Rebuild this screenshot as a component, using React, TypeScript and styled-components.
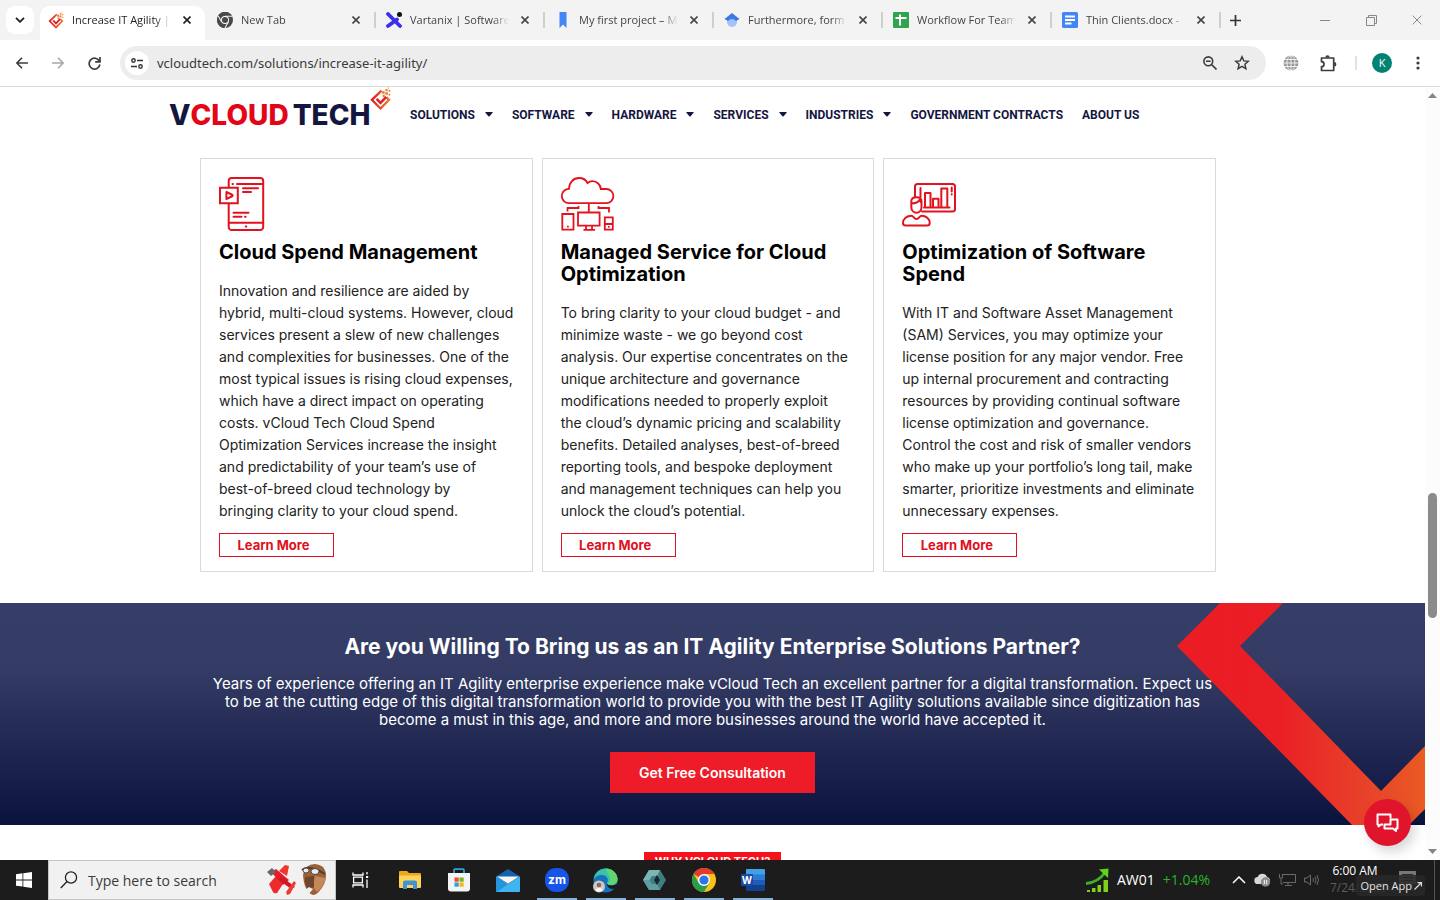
import React from "react";
import styled, { createGlobalStyle } from "styled-components";

const ui = `"Open Sans", "Noto Sans", sans-serif`;
const site = `Inter, "Liberation Sans", sans-serif`;
const navy = "#14163f";
const red = "#e01020";

const GlobalStyle = createGlobalStyle`
  *, *::before, *::after { box-sizing: border-box; }
  html, body { margin: 0; padding: 0; }
  body { font-family: ${ui}; background: #fff; color: #1f1f1f; overflow: hidden; }
  button, input { font: inherit; color: inherit; border: 0; margin: 0; padding: 0; background: none; }
  button { cursor: pointer; }
  h2, h3, p, ul { margin: 0; padding: 0; }
  a { color: inherit; text-decoration: none; }
  svg { display: block; flex: none; }
`;

const Screen = styled.div`
  display: flex;
  flex-direction: column;
  height: 100vh;
  overflow: hidden;
`;

/* ---------- browser tabs ---------- */

const TabStrip = styled.div`
  display: flex;
  flex: none;
  height: 40px;
  padding-left: 6px;
  background: #f3f3f3;
`;

const TabSearch = styled.button`
  display: grid;
  place-items: center;
  width: 28px;
  height: 28px;
  margin: 6px 6px 0 0;
  border-radius: 9px;
  background: #fff;
`;

const TabList = styled.div`
  display: grid;
  grid-template-columns: repeat(7, minmax(0, 1fr));
  flex: 0 1 1183px;
  min-width: 0;
`;

const Tab = styled.div<{ $active?: boolean }>`
  display: flex;
  min-width: 0;
  align-items: center;
  gap: 8px;
  height: ${(p) => (p.$active ? "34px" : "28px")};
  margin: ${(p) => (p.$active ? "6px 4px 0 0" : "6px 0 0 0")};
  padding: ${(p) => (p.$active ? "0 10px 6px 8px" : "0 2px 0 8px")};
  border-radius: ${(p) => (p.$active ? "10px 10px 0 0" : "0")};
  background: ${(p) => (p.$active ? "#fff" : "transparent")};
  color: ${(p) => (p.$active ? "#1f1f1f" : "#444")};
`;

const TabTitle = styled.span`
  flex: 1 1 0;
  min-width: 0;
  overflow: hidden;
  white-space: nowrap;
  font-size: 11px;
  line-height: 16px;
  mask-image: linear-gradient(90deg, #000 84%, transparent 100%);
`;

const TabClose = styled.button`
  display: grid;
  place-items: center;
  width: 16px;
  height: 16px;
`;

const TabDivider = styled.span<{ $shown: boolean }>`
  width: 2px;
  height: 16px;
  flex: none;
  margin-left: 2px;
  background: ${(p) => (p.$shown ? "#cfcfcf" : "transparent")};
`;

const NewTab = styled.button`
  display: grid;
  place-items: center;
  width: 24px;
  height: 28px;
  margin-top: 6px;
`;

const WindowControls = styled.div`
  display: flex;
  margin-left: auto;
`;

const WindowButton = styled.button`
  display: grid;
  place-items: center;
  width: 46px;
  height: 40px;
  color: #888;
`;

/* ---------- browser toolbar ---------- */

const Toolbar = styled.div`
  display: flex;
  flex: none;
  align-items: center;
  height: 47px;
  padding: 0 4px;
  border-bottom: 1px solid #dcdcdc;
  background: #fff;
`;

const ToolButton = styled.button<{ $w?: number; $dim?: boolean }>`
  display: grid;
  place-items: center;
  width: ${(p) => p.$w ?? 36}px;
  height: 34px;
  color: ${(p) => (p.$dim ? "#a8a8a8" : "#3c3c3c")};
`;

const Omnibox = styled.div`
  display: flex;
  flex: 1;
  align-items: center;
  height: 34px;
  margin: 0 8px;
  padding: 0 8px 0 5px;
  border-radius: 17px;
  background: #ededed;
`;

const SiteInfo = styled.button`
  display: grid;
  place-items: center;
  width: 24px;
  height: 24px;
  border-radius: 50%;
  background: #fff;
`;

const UrlInput = styled.input`
  flex: 1;
  min-width: 0;
  margin-left: 8px;
  font-family: "Noto Sans", sans-serif;
  font-size: 13px;
  color: #3a3a3a;
  outline: 0;
`;

const ToolDivider = styled.span`
  width: 2px;
  height: 14px;
  margin: 0 7px;
  background: #e2e2e2;
`;

const Avatar = styled.span`
  display: grid;
  place-items: center;
  width: 20px;
  height: 20px;
  border-radius: 50%;
  background: #018273;
  color: #fff;
  font-size: 11px;
  line-height: 20px;
`;

/* ---------- page frame ---------- */

const Viewport = styled.div`
  display: flex;
  flex: 1;
  min-height: 0;
  overflow: hidden;
`;

const Page = styled.div`
  flex: 1;
  min-width: 0;
  font-family: ${site};
  background: #fff;
`;

const ScrollBar = styled.div`
  display: flex;
  flex-direction: column;
  align-items: center;
  width: 15px;
  padding: 6px 0;
  background: #fcfcfc;
`;

const ScrollThumb = styled.div`
  width: 9px;
  height: 125px;
  border-radius: 5px;
  background: #8b8b8b;
`;

const Spacer = styled.div<{ $grow: number }>`
  flex: ${(p) => p.$grow} 1 0;
`;

/* ---------- site header ---------- */

const SiteHeader = styled.header`
  display: flex;
  align-items: center;
  height: 55px;
  max-width: 1087px;
  margin: 0 auto;
`;

const Logo = styled.a`
  display: flex;
  width: 223px;
  height: 55px;
  font-size: 28px;
  line-height: 56px;
  font-weight: 800;
  color: ${navy};
  white-space: nowrap;
`;

const LogoWord = styled.span<{ $red?: boolean; $gap?: boolean }>`
  color: ${(p) => (p.$red ? "#e30617" : navy)};
  margin-left: ${(p) => (p.$gap ? "4px" : "0")};
`;

const Nav = styled.nav`
  display: flex;
  gap: 19px;
  margin-left: 18px;
  font-family: Roboto, sans-serif;
  font-size: 12px;
  line-height: 16px;
  font-weight: 700;
  color: ${navy};
  white-space: nowrap;
`;

const NavLink = styled.a`
  display: flex;
  align-items: center;
  gap: 10px;
`;

/* ---------- solution cards ---------- */

const CardGrid = styled.section`
  display: grid;
  grid-template-columns: repeat(3, 1fr);
  gap: 9px;
  max-width: 1025px;
  margin: 0 auto;
  padding: 16px 9px 31px 0;
`;

const Card = styled.article`
  display: flex;
  flex-direction: column;
  align-items: flex-start;
  padding: 18px 18px 14px;
  border: 1px solid #dadada;
`;

const CardTitle = styled.h3`
  margin-top: 10px;
  font-size: 20px;
  line-height: 22px;
  font-weight: 700;
  color: #000;
  white-space: nowrap;
`;

const CardText = styled.p`
  margin-top: 17px;
  font-size: 14px;
  line-height: 22px;
  color: #222;
  white-space: nowrap;
`;

const CardButton = styled.button`
  width: 115px;
  height: 24px;
  margin-top: 11px;
  padding-right: 6px;
  border: 1px solid ${red};
  font-size: 13px;
  line-height: 20px;
  font-weight: 700;
  color: ${red};
`;

/* ---------- call to action ---------- */

const Cta = styled.section`
  position: relative;
  display: flex;
  flex-direction: column;
  align-items: center;
  height: 222px;
  padding-top: 32px;
  background: linear-gradient(180deg, #353e66 0%, #343c65 30%, #0a123e 100%);
  color: #fff;
  text-align: center;
`;

const CtaArt = styled.svg`
  position: absolute;
  top: 0;
  right: 0;
`;

const CtaTitle = styled.h2`
  position: relative;
  font-size: 21px;
  line-height: 24px;
  font-weight: 700;
`;

const CtaText = styled.p`
  position: relative;
  margin-top: 16px;
  font-size: 15px;
  line-height: 18px;
  white-space: nowrap;
`;

const CtaButton = styled.button`
  position: relative;
  width: 205px;
  height: 41px;
  margin-top: 23px;
  background: #ed1c28;
  font-size: 14px;
  font-weight: 600;
  color: #fff;
`;

const NextSection = styled.section`
  display: flex;
  justify-content: center;
  padding-top: 27px;
`;

const SectionTag = styled.span`
  width: 137px;
  padding-top: 1px;
  background: #f5121d;
  font-size: 11px;
  line-height: 16px;
  font-weight: 700;
  color: #fff;
  text-align: center;
  white-space: nowrap;
`;

const ChatButton = styled.button`
  position: fixed;
  right: 29px;
  bottom: 54px;
  display: grid;
  place-items: center;
  width: 47px;
  height: 47px;
  border-radius: 50%;
  background: #e0142c;
  box-shadow: 4px 6px 12px rgba(0, 0, 0, 0.16);
`;

/* ---------- taskbar ---------- */

const TaskBar = styled.footer`
  position: relative;
  display: flex;
  flex: none;
  height: 40px;
  background: #1c1c1c;
  color: #fff;
`;

const StartButton = styled.button`
  display: grid;
  place-items: center;
  width: 48px;
`;

const SearchBox = styled.label`
  display: flex;
  align-items: center;
  gap: 10px;
  width: 288px;
  padding: 0 8px 0 11px;
  border: 1px solid #c4c4c4;
  background: #f1f1f1;
`;

const SearchInput = styled.input`
  flex: 1;
  min-width: 0;
  font-size: 14px;
  color: #333;
  outline: 0;
  &::placeholder { color: #3a3a3a; opacity: 1; }
`;

const TaskButton = styled.button<{ $open?: boolean }>`
  display: flex;
  flex-direction: column;
  align-items: center;
  justify-content: center;
  width: 49px;
  height: 40px;
  background: ${(p) =>
    p.$open ? "linear-gradient(#84b4de, #84b4de) center bottom / 40px 2px no-repeat" : "none"};
`;

const Tray = styled.div`
  display: flex;
  align-items: center;
  margin-left: auto;
  margin-right: 5px;
  padding-right: 18px;
  border-right: 1px solid #555;
  font-size: 14px;
  line-height: 20px;
`;

const Stock = styled.button`
  display: flex;
  align-items: center;
  gap: 8px;
  margin-right: 22px;
`;

const Gain = styled.span`
  color: #25b425;
`;

const TrayIcons = styled.div`
  display: flex;
  align-items: center;
  gap: 8px;
  margin-right: 10px;
`;

const Clock = styled.div`
  align-self: flex-start;
  width: 50px;
  margin-right: 19px;
  padding-top: 4px;
  font-size: 12px;
  text-align: center;
`;

const Time = styled.div`
  height: 11px;
  overflow: hidden;
  line-height: 14px;
  white-space: nowrap;
`;

const DateText = styled.div`
  margin-top: 6px;
  line-height: 14px;
  color: #5c5c5c;
`;

const OpenApp = styled.a`
  position: absolute;
  right: 15px;
  bottom: 4px;
  display: flex;
  align-items: center;
  gap: 2px;
  height: 21px;
  padding: 0 3px 0 5px;
  border-radius: 4px;
  background: rgba(40, 40, 40, 0.86);
  font-size: 11px;
  color: #e4e4e4;
  white-space: nowrap;
`;

/* ---------- drawings ---------- */

const Cross = ({ size = 8, width = 2 }: { size?: number; width?: number }) => (
  <svg width={size} height={size} viewBox="0 0 8 8" stroke="currentColor" strokeWidth={width} fill="none">
    <path d="M.5 .5l7 7M7.500 .5l-7 7" />
  </svg>
);

const Diamond = ({ w, h }: { w: number; h: number }) => (
  <svg width={w} height={h} viewBox="0 0 20 22" fill="none">
    <defs>
      <linearGradient id="diamond" x1="0" x2="1">
        <stop offset="0" stopColor="#e01f26" />
        <stop offset="1" stopColor="#ee7a2e" />
      </linearGradient>
    </defs>
    <path d="M11 3L1.800 11.800 10 20l8.200-8.200-2.400-2.400" stroke="url(#diamond)" strokeWidth="2.200" />
    <path d="M6.300 10.800l3.700 3.900 5.500-5.700" stroke="#dc2228" strokeWidth="2.400" />
    <path
      d="M11.500 3.500H14V6h-2.500zM14.600 4.600H17V7h-2.400zM14.800 1.500h2v2h-2zM17.700 2.500h1.600v1.600h-1.600zM17.700 6h1.600v1.600h-1.600zM17 0h1v1h-1zM12 7h2v2h-2z"
      fill="#ee7a2e"
    />
  </svg>
);

const ChromeMark = ({ size, gray }: { size: number; gray?: boolean }) => (
  <svg width={size} height={size} viewBox="0 0 24 24">
    <circle cx="12" cy="12" r="12" fill={gray ? "#4a4a4a" : "#fbc116"} />
    <path d="M12 12L1.600 6A12 12 0 0 1 22.400 6H12z" fill={gray ? "#4a4a4a" : "#e33b2e"} />
    <path d="M1.600 6A12 12 0 0 0 12 24l5.200-9L12 12 6.800 15z" fill={gray ? "#4a4a4a" : "#2a9d4b"} />
    {gray && <path d="M12 6.500h10.500M6.800 14.500L1.800 6M17 15l-5 9" stroke="#f3f3f3" strokeWidth="1.600" />}
    <circle cx="12" cy="12" r="6" fill="#fff" />
    <circle cx="12" cy="12" r="4.600" fill={gray ? "#4a4a4a" : "#2f74e8"} />
  </svg>
);

const favicons: Record<string, React.ReactNode> = {
  vcloud: <Diamond w={16} h={17} />,
  chrome: <ChromeMark size={16} gray />,
  vartanix: (
    <svg width="16" height="16" viewBox="0 0 16 16">
      <path d="M2 2l12 12M11 7.500L2 14" stroke="#3a2ff0" strokeWidth="3.800" strokeLinecap="round" />
      <circle cx="13.500" cy="2.500" r="2.500" fill="#111" />
    </svg>
  ),
  project: (
    <svg width="16" height="16" viewBox="0 0 16 16">
      <path d="M4.500 0h7v16L8 12.500 4.500 16z" fill="#4285f4" />
    </svg>
  ),
  scholar: (
    <svg width="16" height="16" viewBox="0 0 16 16">
      <circle cx="8" cy="10" r="5" fill="#a3c2f8" />
      <path d="M8 1l7.500 6L12 9a5 5 0 0 0-8 0L.5 7z" fill="#3c78e6" />
    </svg>
  ),
  sheet: (
    <svg width="16" height="16" viewBox="0 0 16 16">
      <rect width="16" height="16" rx="1" fill="#2fa550" />
      <path d="M7 2.500v11M2.500 6h11" stroke="#fff" strokeWidth="2" />
    </svg>
  ),
  doc: (
    <svg width="16" height="16" viewBox="0 0 16 16">
      <rect width="16" height="16" rx="1.500" fill="#4285f4" />
      <path d="M3 4.500h10M3 8h10M3 11.500h6.500" stroke="#fff" strokeWidth="1.800" />
    </svg>
  ),
};

const tabs = [
  { icon: "vcloud", title: "Increase IT Agility |", active: true },
  { icon: "chrome", title: "New Tab" },
  { icon: "vartanix", title: "Vartanix | Software" },
  { icon: "project", title: "My first project – M" },
  { icon: "scholar", title: "Furthermore, form" },
  { icon: "sheet", title: "Workflow For Team" },
  { icon: "doc", title: "Thin Clients.docx -" },
];

const PhoneArt = () => (
  <svg width="54" height="54" viewBox="0 0 54 54" fill="none" stroke="#e3121f" strokeWidth="2" strokeLinecap="round">
    <path d="M9.700 10V4a3 3 0 0 1 3-3h28.500a3 3 0 0 1 3 3v46a3 3 0 0 1-3 3H12.700a3 3 0 0 1-3-3V27" />
    <path d="M1 10.800h17.800v15.400H1z" />
    <path d="M7.400 15v7l5.200-2.500a1 1 0 0 0 0-2z" strokeLinejoin="round" />
    <path d="M13.500 7h.5M18 7h26M24 11.300h15M24 15h8M14.500 35.700h15M14.500 39.700h8M26 39.700h.6M10 45.700h34M26.700 49.400h.6" />
  </svg>
);

const CloudArt = () => (
  <svg width="54" height="54" viewBox="0 0 54 54" fill="none" stroke="#e3121f" strokeWidth="1.800">
    <path d="M8 26.200A7.200 7.200 0 0 1 8 11.800C8 5.500 12.500 1 18 1c4 0 7 2 8.500 5 1.500-1.300 3-1.800 5-1.800 4.500 0 8 3.500 8.300 7.800h5.500a7.100 7.100 0 0 1 0 14.200z" />
    <path d="M6.500 34.500V31h11v-2M27.800 27v8M37.500 29v2h10.500v4.500" />
    <path d="M1.300 37h11.200v15.600H1.300zM17 35.500h21.600v13.200H17zM43.800 40.300h8v12.300h-8z" />
    <path d="M25 49v3.500M31 49v3.500M22.500 52.800H34M43.800 47h8M6 49.700h1.800M47 49.800h1.600" />
  </svg>
);

const BoardArt = () => (
  <svg width="54" height="54" viewBox="0 0 54 54" fill="none" stroke="#e3121f" strokeWidth="2" strokeLinecap="round" strokeLinejoin="round">
    <path d="M13 19.500V9.500A2.500 2.500 0 0 1 15.500 7H50.500A2.500 2.500 0 0 1 53 9.500V32A2.500 2.500 0 0 1 50.500 34.500H20" />
    <path d="M18.500 11v9M22 30.500h25.500M23 30V16h5.500v14M31 30v-8.300h5.500V30M39.300 30V11.500h6V30M49.700 10.500v4M49.700 17.300v.3" />
    <path d="M9.300 24.500c0-2.500 2-4.300 5.200-4.300 3 0 5 1.800 5 4.300v5.500c0 3.500-2.300 5.700-5 5.700-2.900 0-5.200-2.200-5.200-5.700zM9.500 26.500c4-.3 7-1.200 8-3.500l2 3" />
    <path d="M9.500 38.700c1.800 0 2.500 3.300 5 3.300s3.200-3.300 5-3.300c4.500 0 8.200 3.300 8.200 7.300 0 1.700-1 2.500-2.700 2.500H3.700C2 48.500 1 47.600 1 46c0-4 3.900-7.300 8.500-7.300z" />
  </svg>
);

const cards = [
  {
    art: <PhoneArt />,
    title: ["Cloud Spend Management"],
    lines: [
      "Innovation and resilience are aided by",
      "hybrid, multi-cloud systems. However, cloud",
      "services present a slew of new challenges",
      "and complexities for businesses. One of the",
      "most typical issues is rising cloud expenses,",
      "which have a direct impact on operating",
      "costs. vCloud Tech Cloud Spend",
      "Optimization Services increase the insight",
      "and predictability of your team’s use of",
      "best-of-breed cloud technology by",
      "bringing clarity to your cloud spend.",
    ],
  },
  {
    art: <CloudArt />,
    title: ["Managed Service for Cloud", "Optimization"],
    lines: [
      "To bring clarity to your cloud budget - and",
      "minimize waste - we go beyond cost",
      "analysis. Our expertise concentrates on the",
      "unique architecture and governance",
      "modifications needed to properly exploit",
      "the cloud’s dynamic pricing and scalability",
      "benefits. Detailed analyses, best-of-breed",
      "reporting tools, and bespoke deployment",
      "and management techniques can help you",
      "unlock the cloud’s potential.",
    ],
  },
  {
    art: <BoardArt />,
    title: ["Optimization of Software", "Spend"],
    lines: [
      "With IT and Software Asset Management",
      "(SAM) Services, you may optimize your",
      "license position for any major vendor. Free",
      "up internal procurement and contracting",
      "resources by providing continual software",
      "license optimization and governance.",
      "Control the cost and risk of smaller vendors",
      "who make up your portfolio’s long tail, make",
      "smarter, prioritize investments and eliminate",
      "unnecessary expenses.",
    ],
  },
];

const ctaLines = [
  "Years of experience offering an IT Agility enterprise experience make vCloud Tech an excellent partner for a digital transformation. Expect us",
  "to be at the cutting edge of this digital transformation world to provide you with the best IT Agility solutions available since digitization has",
  "become a must in this age, and more and more businesses around the world have accepted it.",
];

const Lines = ({ of }: { of: string[] }) => (
  <>
    {of.map((line, i) => (
      <React.Fragment key={line}>
        {i > 0 && <br />}
        {line}
      </React.Fragment>
    ))}
  </>
);

const navItems = [
  { label: "SOLUTIONS", menu: true },
  { label: "SOFTWARE", menu: true },
  { label: "HARDWARE", menu: true },
  { label: "SERVICES", menu: true },
  { label: "INDUSTRIES", menu: true },
  { label: "GOVERNMENT CONTRACTS" },
  { label: "ABOUT US" },
];

const apps: { name: string; open?: boolean; art: React.ReactNode }[] = [
  {
    name: "Task View",
    art: (
      <svg width="18" height="18" viewBox="0 0 18 18" fill="none" stroke="#fff" strokeWidth="1.300">
        <path d="M1 1.500V4h10V1.500M1 16.500V14h10v2.500M1.600 6.200h8.800v5.600H1.600zM15 1v2.500M15 8.500V17" />
        <path d="M14 5h2.200v2H14z" fill="#fff" stroke="none" />
      </svg>
    ),
  },
  {
    name: "File Explorer",
    art: (
      <svg width="22" height="20" viewBox="0 0 22 20">
        <path d="M0 2a1 1 0 0 1 1-1h7l2 2h11a1 1 0 0 1 1 1v4H0z" fill="#e8a91c" />
        <path d="M0 5.500h22V17a1 1 0 0 1-1 1H1a1 1 0 0 1-1-1z" fill="#fdd35a" />
        <path d="M4 19v-6.500a2 2 0 0 1 2-2h10a2 2 0 0 1 2 2V19h-4v-4H8v4z" fill="#3f93d6" />
      </svg>
    ),
  },
  {
    name: "Microsoft Store",
    art: (
      <svg width="24" height="24" viewBox="0 0 24 24">
        <path d="M7 6V2.200a1 1 0 0 1 1-1h8a1 1 0 0 1 1 1V6" fill="none" stroke="#2ba5d8" strokeWidth="1.800" />
        <path d="M1 5h22v15.500a3 3 0 0 1-3 3H4a3 3 0 0 1-3-3z" fill="#f4f4f4" />
        <path d="M7.500 9.500h4.200v4.200H7.500z" fill="#e8502a" />
        <path d="M12.500 9.500h4.200v4.200h-4.200z" fill="#79b51f" />
        <path d="M7.500 14.500h4.200v4.200H7.500z" fill="#2a9fe0" />
        <path d="M12.500 14.500h4.200v4.200h-4.200z" fill="#f7b616" />
      </svg>
    ),
  },
  {
    name: "Mail",
    art: (
      <svg width="24" height="23" viewBox="0 0 24 23">
        <path d="M0 7.500L12 0l12 7.500V12H0z" fill="#1460ad" />
        <path d="M0 7.500l12 7.500 12-7.500V22a1 1 0 0 1-1 1H1a1 1 0 0 1-1-1z" fill="#3fb4ee" />
        <path d="M0 7.500l12 7.500L1 23a1 1 0 0 1-1-1z" fill="#2494dc" />
        <path d="M1 7.500h22L12 14.800z" fill="#f5f5f5" />
      </svg>
    ),
  },
  {
    name: "Zoom",
    open: true,
    art: (
      <svg width="24" height="24" viewBox="0 0 24 24">
        <rect width="24" height="24" rx="11" fill="#1555ea" />
        <text x="12" y="16" textAnchor="middle" fontFamily="Inter, sans-serif" fontSize="12" fontWeight="700" fill="#fff">
          zm
        </text>
      </svg>
    ),
  },
  {
    name: "Microsoft Edge",
    open: true,
    art: (
      <svg width="25" height="25" viewBox="0 0 25 25">
        <circle cx="12.500" cy="12.500" r="12" fill="#1672bd" />
        <path d="M.6 11.500C1.500 5 6.500.5 12.500.5c7 0 12 5 12 10.500 0 4-3 6-6.500 6-2.500 0-4-1-4-2 0-.8.9-1.200.9-3C14.900 9 12 7 8.500 7S2 9 .6 11.500z" fill="#38c2b0" />
        <path d="M12.500.5c7 0 12 5 12 10.500 0 4-3 6-6.500 6-2.500 0-4-1-4-2 3 0 5-4 1-9z" fill="#5fd56e" />
        <path d="M14 15c0 2 2 2.600 4.500 2.400 3 0 5-1 6.500-2.400l-.5 4c-2 2-5 2.500-7.500 1.500-2-1-3.500-3-3-5.500z" fill="#1c1c1c" />
        <circle cx="6" cy="18.500" r="6" fill="#cfc8c3" />
        <circle cx="6" cy="17" r="2.300" fill="#8d6653" />
        <path d="M2.500 22.500a3.600 3.600 0 0 1 7 0 6 6 0 0 1-7 0z" fill="#f7f7f7" />
      </svg>
    ),
  },
  {
    name: "Workspace",
    open: true,
    art: (
      <svg width="23" height="22" viewBox="0 0 23 22">
        <path d="M6 1h11l6 10-6 10H6L0 11z" fill="#3f7f84" />
        <path d="M6 1h11l-3 6H9L6.500 11 0 11z" fill="#7cb5b6" />
        <path d="M0 11h6.500L9 15h5l3 6H6z" fill="#5f9da0" />
        <path d="M14 6l3 5-3 5-3-5z" fill="#16262c" />
      </svg>
    ),
  },
  { name: "Google Chrome", open: true, art: <ChromeMark size={24} /> },
  {
    name: "Word",
    open: true,
    art: (
      <svg width="24" height="22" viewBox="0 0 24 22">
        <path d="M6 0h17a1 1 0 0 1 1 1v5H5V1a1 1 0 0 1 1-1z" fill="#41a0e8" />
        <path d="M5 5.500h19V11H5z" fill="#2b7cd3" />
        <path d="M5 11h19v5.500H5z" fill="#1d5cbd" />
        <path d="M5 16.500h19V21a1 1 0 0 1-1 1H6a1 1 0 0 1-1-1z" fill="#14418f" />
        <rect y="5" width="12" height="12" rx="1" fill="#164aa5" />
        <text x="6" y="14.500" textAnchor="middle" fontFamily="Inter, sans-serif" fontSize="10" fontWeight="700" fill="#fff">
          W
        </text>
      </svg>
    ),
  },
];

export default function App() {
  return (
    <Screen>
      <GlobalStyle />

      <TabStrip>
        <TabSearch aria-label="Search tabs">
          <svg width="10" height="6" viewBox="0 0 10 6" fill="none" stroke="#1f1f1f" strokeWidth="1.800">
            <path d="M1 .8l4 4 4-4" />
          </svg>
        </TabSearch>
        <TabList>
          {tabs.map((t, i) => (
            <Tab key={t.title} $active={t.active}>
              {favicons[t.icon]}
              <TabTitle>{t.title}</TabTitle>
              <TabClose aria-label={`Close ${t.title}`}>
                <Cross width={1.6} />
              </TabClose>
              {!t.active && <TabDivider $shown={i > 0} />}
            </Tab>
          ))}
        </TabList>
        <NewTab aria-label="New tab">
          <svg width="11" height="11" viewBox="0 0 11 11" stroke="#333" strokeWidth="1.700">
            <path d="M5.500 0v11M0 5.500h11" />
          </svg>
        </NewTab>
        <WindowControls>
          <WindowButton aria-label="Minimize">
            <svg width="10" height="10" viewBox="0 0 10 10" stroke="currentColor">
              <path d="M0 5.500h10" />
            </svg>
          </WindowButton>
          <WindowButton aria-label="Restore">
            <svg width="11" height="11" viewBox="0 0 11 11" fill="none" stroke="currentColor">
              <path d="M.5 2.500h8v8h-8zM2.500 2.500v-2h8v8h-2" />
            </svg>
          </WindowButton>
          <WindowButton aria-label="Close window">
            <Cross size={10} width={0.8} />
          </WindowButton>
        </WindowControls>
      </TabStrip>

      <Toolbar>
        <ToolButton aria-label="Back">
          <svg width="12" height="12" viewBox="0 0 12 12" fill="none" stroke="currentColor" strokeWidth="1.600">
            <path d="M12 6H1M6 .8L.9 6 6 11.200" />
          </svg>
        </ToolButton>
        <ToolButton aria-label="Forward" $dim>
          <svg width="12" height="12" viewBox="0 0 12 12" fill="none" stroke="currentColor" strokeWidth="1.600">
            <path d="M0 6h11M6 .8L11.100 6 6 11.200" />
          </svg>
        </ToolButton>
        <ToolButton aria-label="Reload">
          <svg width="13" height="13" viewBox="0 0 13 13" fill="none" stroke="currentColor" strokeWidth="1.700">
            <path d="M11.300 4A5.400 5.400 0 1 0 11.900 7.500" />
            <path d="M12 0v4.800H7.200" />
          </svg>
        </ToolButton>
        <Omnibox>
          <SiteInfo aria-label="View site information">
            <svg width="12" height="11" viewBox="0 0 12 11" fill="none" stroke="#333" strokeWidth="1.400">
              <circle cx="2.500" cy="2.500" r="1.700" />
              <circle cx="9.500" cy="8.500" r="1.700" />
              <path d="M6 2.500h6M0 8.500h6" />
            </svg>
          </SiteInfo>
          <UrlInput aria-label="Address" defaultValue="vcloudtech.com/solutions/increase-it-agility/" />
          <ToolButton aria-label="Zoom" $w={32}>
            <svg width="14" height="14" viewBox="0 0 14 14" fill="none" stroke="currentColor" strokeWidth="1.600">
              <circle cx="5.300" cy="5.300" r="4.400" />
              <path d="M8.500 8.500l5 5M3 5.300h4.600" />
            </svg>
          </ToolButton>
          <ToolButton aria-label="Bookmark" $w={32}>
            <svg width="16" height="16" viewBox="0 0 16 16" fill="none" stroke="currentColor" strokeWidth="1.500">
              <path d="M8 1.800l1.800 4.100 4.500.4-3.400 3 1 4.400L8 11.400l-3.900 2.300 1-4.400-3.400-3 4.500-.4z" />
            </svg>
          </ToolButton>
        </Omnibox>
        <ToolButton aria-label="Translate" $w={34} $dim>
          <svg width="16" height="16" viewBox="0 0 16 16" fill="none" stroke="#fff" strokeWidth=".8">
            <circle cx="8" cy="8" r="7.500" fill="#999" stroke="none" />
            <path d="M8 0v16M1 4.500h14M0 8h16M1 11.500h14" />
            <ellipse cx="8" cy="8" rx="4" ry="7.500" />
          </svg>
        </ToolButton>
        <ToolButton aria-label="Extensions" $w={40}>
          <svg width="17" height="17" viewBox="0 0 17 17" fill="none" stroke="currentColor" strokeWidth="1.700" strokeLinejoin="round">
            <path d="M1.500 3h12.200v12.500H1.500v-3.800a2.500 2.500 0 0 0 0-5z" />
            <path d="M5.300 2.500a2.200 2.200 0 0 1 4.400 0zM14.200 7a2.200 2.200 0 0 1 0 4.400z" fill="currentColor" stroke="none" />
          </svg>
        </ToolButton>
        <ToolDivider />
        <ToolButton aria-label="Profile" $w={36}>
          <Avatar>K</Avatar>
        </ToolButton>
        <ToolButton aria-label="Menu">
          <svg width="4" height="14" viewBox="0 0 4 14" fill="currentColor">
            <circle cx="2" cy="2" r="1.600" />
            <circle cx="2" cy="7" r="1.600" />
            <circle cx="2" cy="12" r="1.600" />
          </svg>
        </ToolButton>
      </Toolbar>

      <Viewport>
        <Page>
          <SiteHeader>
            <Logo href="#" aria-label="vCloud Tech home">
              <LogoWord>V</LogoWord>
              <LogoWord $red>CLOUD</LogoWord>
              <LogoWord $gap>TECH</LogoWord>
              <Diamond w={21} h={24} />
            </Logo>
            <Nav>
              {navItems.map((n) => (
                <NavLink key={n.label} href="#">
                  {n.label}
                  {n.menu && (
                    <svg width="8" height="5" viewBox="0 0 8 5" fill={navy}>
                      <path d="M.8 0h6.400q.8 0 .4.700L4.600 4.300q-.6.600-1.200 0L.4.700Q0 0 .8 0z" />
                    </svg>
                  )}
                </NavLink>
              ))}
            </Nav>
          </SiteHeader>

          <CardGrid>
            {cards.map((c) => (
              <Card key={c.title[0]}>
                {c.art}
                <CardTitle>
                  <Lines of={c.title} />
                </CardTitle>
                <CardText>
                  <Lines of={c.lines} />
                </CardText>
                <CardButton>Learn More</CardButton>
              </Card>
            ))}
          </CardGrid>

          <Cta>
            <CtaArt width="248" height="222" viewBox="0 0 248 222" aria-hidden="true">
              <defs>
                <linearGradient id="chevron" x1="0" x2="1">
                  <stop offset="0" stopColor="#eb1c24" />
                  <stop offset=".4" stopColor="#ea1e25" />
                  <stop offset=".8" stopColor="#e8462a" />
                  <stop offset="1" stopColor="#ea5a22" />
                </linearGradient>
              </defs>
              <path d="M43 0h63L63 43l141 145 44-45v63l-16 16h-57L0 43z" fill="url(#chevron)" />
            </CtaArt>
            <CtaTitle>Are you Willing To Bring us as an IT Agility Enterprise Solutions Partner?</CtaTitle>
            <CtaText>
              <Lines of={ctaLines} />
            </CtaText>
            <CtaButton>Get Free Consultation</CtaButton>
          </Cta>

          <NextSection>
            <SectionTag>WHY VCLOUD TECH?</SectionTag>
          </NextSection>
        </Page>

        <ScrollBar aria-hidden="true">
          <svg width="9" height="5" viewBox="0 0 9 5" fill="#858585">
            <path d="M4.500 0L9 5H0z" />
          </svg>
          <Spacer $grow={394} />
          <ScrollThumb />
          <Spacer $grow={231} />
          <svg width="9" height="5" viewBox="0 0 9 5" fill="#858585">
            <path d="M4.500 5L9 0H0z" />
          </svg>
        </ScrollBar>

        <ChatButton aria-label="Open chat">
          <svg width="23" height="20" viewBox="0 0 23 20" fill="none" stroke="#fff" strokeWidth="2" strokeLinejoin="round">
            <path d="M7 11.500H5l-2.500 2v-2H1.500V1.500h13v4" />
            <path d="M14.500 6.500h7v9h-1.500v2.500l-3-2.500H8.500v-4h6z" />
          </svg>
        </ChatButton>
      </Viewport>

      <TaskBar>
        <StartButton aria-label="Start">
          <svg width="16" height="16" viewBox="0 0 16 16" fill="#fff">
            <path d="M0 2.200l6.500-.9v6.200H0zM7.300 1.200L16 0v7.500H7.300zM0 8.400h6.500v6.200L0 13.700zM7.300 8.400H16V16l-8.700-1.200z" />
          </svg>
        </StartButton>
        <SearchBox>
          <svg width="18" height="18" viewBox="0 0 18 18" fill="none" stroke="#222" strokeWidth="1.300">
            <circle cx="11" cy="6.500" r="5.600" />
            <path d="M7 10.500L.8 17" />
          </svg>
          <SearchInput aria-label="Search" placeholder="Type here to search" />
          <svg width="62" height="34" viewBox="0 0 62 34">
            <path d="M14 8L20 2l4 1-2 10z" fill="#f0342f" />
            <path d="M4 21l7-8 9 5-8 12q-3 1-4-1z" fill="#ee2a2c" />
            <path d="M6 9l5-3 13 11-6 5z" fill="#e51d28" />
            <path d="M16 13l14 11-4 2-12-9z" fill="#d01722" />
            <path d="M21 29l8-11 2 2-6 11-3 1z" fill="#ef3a33" />
            <path d="M2 9l5-4 4 4-5 4z" fill="#6d6470" />
            <path d="M38 12q2-11 12-11 11 1 11 12c0 9-8 18-12 19-4 0-10-5-11-20z" fill="#9a6038" />
            <path d="M50 13l11 2q-2 9-9 14l-4-5z" fill="#c3875a" />
            <path d="M40 14q-1 9 4 13l5-3V13z" fill="#6e452b" />
            <path d="M37 7q6-6 23 4" stroke="#4a4038" strokeWidth="2" fill="none" />
            <ellipse cx="41" cy="7.500" rx="3" ry="2.500" fill="#e7edf0" stroke="#54463c" />
            <ellipse cx="50" cy="8.500" rx="4" ry="3" fill="#e7edf0" stroke="#54463c" />
            <path d="M40 27l4-3 4 2-5 6z" fill="#eee" />
          </svg>
        </SearchBox>
        {apps.map((a) => (
          <TaskButton key={a.name} aria-label={a.name} $open={a.open}>
            {a.art}
          </TaskButton>
        ))}
        <Tray>
          <Stock>
            <svg width="23" height="24" viewBox="0 0 23 24">
              <path d="M1 22v2h3v-2zM6 20v4h3.500v-4zM11.500 17v7H15v-7zM17.500 12v12H22V12z" fill="#7fd01c" />
              <path d="M0 15.500q12-1 19-11" stroke="#3fae2a" strokeWidth="3" fill="none" />
              <path d="M13 1.500L22.500.5 22 10z" fill="#63d318" />
            </svg>
            <span>AW01</span>
            <Gain>+1.04%</Gain>
          </Stock>
          <TrayIcons>
            <svg width="14" height="8" viewBox="0 0 14 8" fill="none" stroke="#fff" strokeWidth="1.500">
              <path d="M1 7l6-6 6 6" />
            </svg>
            <svg width="17" height="14" viewBox="0 0 17 14">
              <path d="M4 11a3.500 3.500 0 0 1-.3-7A5 5 0 0 1 13 4a3.500 3.500 0 0 1 2 6v1z" fill="#d8d8d8" />
              <circle cx="11.500" cy="9" r="4.700" fill="#8b8b8b" />
              <path d="M10.300 6.800v4.400M12.700 6.800v4.400" stroke="#fff" />
            </svg>
            <svg width="17" height="14" viewBox="0 0 17 14" fill="none" stroke="#6a6a6a">
              <path d="M4 1.500h12.500v8H4M9 9.500v3M6 12.500h7M.5 1v4h3V1M2 5v6h2" />
            </svg>
            <svg width="16" height="14" viewBox="0 0 16 14" fill="none" stroke="#6a6a6a">
              <path d="M.5 5h2.500l3.500-3v10L3 9H.5zM9 5q1 2 0 4M11 3.500q2 3.500 0 7M13 2q3 5 0 10" />
            </svg>
          </TrayIcons>
          <Clock>
            <Time>6:00 AM</Time>
            <DateText>7/24/2023</DateText>
          </Clock>
          <svg width="17" height="18" viewBox="0 0 17 18">
            <path d="M0 0h17v13h-3v4l-4-4H0z" fill="#777" />
            <path d="M3 3.500h11M3 6.500h11M3 9.500h11" stroke="#2a2a2a" />
          </svg>
        </Tray>
        <OpenApp href="#">
          Open App
          <svg width="8" height="8" viewBox="0 0 8 8" fill="none" stroke="#ddd" strokeWidth="1.200">
            <path d="M.5 7.500l7-7M3.500 .6h4v4" />
          </svg>
        </OpenApp>
      </TaskBar>
    </Screen>
  );
}
